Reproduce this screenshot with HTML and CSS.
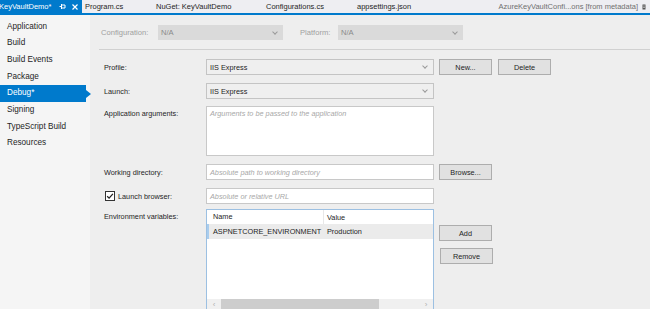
FILE: index.html
```html
<!DOCTYPE html>
<html lang="en">
<head>
    <meta charset="UTF-8">
    <title>KeyVaultDemo - Debug</title>
    <link rel="stylesheet" href="styles.css">
</head>
<body>
<!-- document tabs -->
<div class="tabs">
    <div class="tab active">
        <span>KeyVaultDemo*</span>
        <svg class="pin" width="7" height="7" viewBox="0 0 7 7"><path d="M0.5 3.5h2M2.5 1v5M2.5 2h3.5v3H2.5" fill="none" stroke="#fff" stroke-width="1"/></svg>
        <svg class="close" width="6" height="6" viewBox="0 0 6 6"><path d="M0.5 0.5l5 5M5.5 0.5l-5 5" stroke="#fff" stroke-width="1.2"/></svg>
    </div>
    <div class="tab tab-program">Program.cs</div>
    <div class="tab tab-nuget">NuGet: KeyVaultDemo</div>
    <div class="tab tab-config">Configurations.cs</div>
    <div class="tab">appsettings.json</div>
    <div class="tab preview">
        <span>AzureKeyVaultConfi...ons [from metadata]</span>
        <svg class="lock" width="4" height="6" viewBox="0 0 4 6"><path d="M0.5 0.5h3v5h-3z" fill="#555"/><path d="M1 2h2M1 3.5h2" stroke="#ddd" stroke-width="0.6"/></svg>
    </div>
</div>

<div class="workspace">
    <!-- property pages -->
    <ul class="sidebar">
        <li>Application</li>
        <li>Build</li>
        <li>Build Events</li>
        <li>Package</li>
        <li class="selected">Debug*</li>
        <li>Signing</li>
        <li>TypeScript Build</li>
        <li>Resources</li>
    </ul>

    <div class="main">
        <div class="config-row">
            <span class="config-label">Configuration:</span>
            <div class="config-select"><span>N/A</span><span class="chev"></span></div>
            <span class="config-label platform">Platform:</span>
            <div class="config-select"><span>N/A</span><span class="chev"></span></div>
        </div>
        <div class="separator"></div>

        <div class="form">
            <div class="row row-profile">
                <label class="label">Profile:</label>
                <div class="field select"><span>IIS Express</span><span class="chev"></span></div>
                <button class="btn">New...</button>
                <button class="btn">Delete</button>
            </div>

            <div class="row">
                <label class="label">Launch:</label>
                <div class="field select"><span>IIS Express</span><span class="chev"></span></div>
            </div>

            <div class="row row-top">
                <label class="label label-top">Application arguments:</label>
                <div class="field textarea"><span class="placeholder">Arguments to be passed to the application</span></div>
            </div>

            <div class="row">
                <label class="label">Working directory:</label>
                <div class="field input"><span class="placeholder">Absolute path to working directory</span></div>
                <button class="btn">Browse...</button>
            </div>

            <div class="row">
                <label class="label">
                    <svg class="check" width="10" height="10" viewBox="0 0 10 10"><rect x="0.5" y="0.5" width="9" height="9" fill="#fff" stroke="#333"/><path d="M2.2 5.2l1.9 1.9 3.8-4.2" fill="none" stroke="#222" stroke-width="1.3"/></svg>
                    Launch browser:
                </label>
                <div class="field input"><span class="placeholder">Absolute or relative URL</span></div>
            </div>

            <div class="row row-top row-env">
                <label class="label label-top">Environment variables:</label>
                <div class="env-table">
                    <div class="env-head">
                        <div class="col-name">Name</div>
                        <div class="col-value">Value</div>
                    </div>
                    <div class="env-row">
                        <div class="col-name">ASPNETCORE_ENVIRONMENT</div>
                        <div class="col-value">Production</div>
                    </div>
                    <div class="env-fill"></div>
                    <div class="hscroll">
                        <span class="arrow">&#8249;</span>
                        <span class="thumb"></span>
                        <span class="track"></span>
                        <span class="arrow">&#8250;</span>
                    </div>
                </div>
                <div class="side-buttons">
                    <button class="btn">Add</button>
                    <button class="btn">Remove</button>
                </div>
            </div>
        </div>
    </div>
</div>
</body>
</html>
```

FILE: styles.css
```css
* {
    box-sizing: border-box;
}

body {
    margin: 0;
    width: 650px;
    height: 309px;
    overflow: hidden;
    background: #eeeeee;
    font-family: "Liberation Sans", Arial, sans-serif;
    color: #1e1e1e;
}

/* tab strip */
.tabs {
    display: flex;
    height: 15px;
    background: #eeeef2;
    border-bottom: 2px solid #007acc;
    font-size: 7.5px;
    line-height: 13px;
    white-space: nowrap;
}

.tab {
    padding-left: 3px;
}

.tab.active {
    display: flex;
    align-items: center;
    width: 84px;
    margin-left: -2px;
    padding-left: 1px;
    background: #007acc;
    color: #fff;
}

.tab.active .pin {
    margin-left: auto;
}

.tab.active .close {
    margin-left: 6px;
    margin-right: 4px;
}

.tab-program { width: 71px; }
.tab-nuget { width: 110px; }
.tab-config { width: 91px; }

.tab.preview {
    display: flex;
    align-items: center;
    margin-left: auto;
    color: #707070;
}

.tab.preview .lock {
    margin: 0 4px 0 4px;
}

/* left navigation */
.workspace {
    display: flex;
    height: 294px;
}

.sidebar {
    width: 90px;
    margin: 0;
    padding: 3.65px 0 0;
    list-style: none;
    background: #f5f5f5;
    font-size: 8.2px;
}

.sidebar li {
    height: 16.7px;
    line-height: 16.7px;
    padding-left: 7px;
}

.sidebar li.selected {
    position: relative;
    width: 86px;
    background: #007acc;
    color: #fff;
}

.sidebar li.selected::after {
    content: "";
    position: absolute;
    left: 100%;
    top: 50%;
    margin-top: -4px;
    border-left: 5px solid #007acc;
    border-top: 4px solid transparent;
    border-bottom: 4px solid transparent;
}

/* main panel */
.main {
    flex: 1;
    padding: 10px 0 0 9px;
}

.config-row {
    display: flex;
    align-items: center;
    height: 15px;
    padding-left: 2px;
    font-size: 7.6px;
    color: #a0a0a0;
}

.config-label {
    width: 57px;
}

.config-label.platform {
    width: 38px;
    margin-left: 17px;
}

.config-select {
    display: flex;
    align-items: center;
    justify-content: space-between;
    width: 125px;
    height: 15px;
    padding: 0 6px 0 3px;
    background: #dadada;
    color: #8a8a8a;
}

.chev {
    width: 4px;
    height: 4px;
    margin-top: -2px;
    border-right: 1px solid #9a9a9a;
    border-bottom: 1px solid #9a9a9a;
    transform: rotate(45deg);
}

.separator {
    height: 1px;
    margin-top: 9px;
    background: #d0d0d0;
}

.form {
    padding-left: 5px;
    font-size: 7.3px;
}

.row {
    display: flex;
    align-items: center;
    margin-top: 8px;
}

.row-profile {
    margin-top: 9px;
}

.row-top {
    align-items: flex-start;
    margin-top: 7px;
}

.row-env {
    margin-top: 5px;
}

.label {
    display: flex;
    align-items: center;
    width: 102px;
    flex-shrink: 0;
}

.label-top {
    padding-top: 3px;
}

.check {
    margin: 0 3px 0 1px;
}

.field {
    display: flex;
    align-items: center;
    width: 228px;
    height: 16px;
    padding: 0 4px 0 3px;
    border: 1px solid #c8c8c8;
    background: #fff;
}

.field.select {
    justify-content: space-between;
    background: #efefef;
    border-color: #c4c4c4;
}

.field.select .chev {
    margin-right: 2px;
}

.field.textarea {
    align-items: flex-start;
    height: 50px;
    padding-top: 2px;
}

.placeholder {
    font-style: italic;
    color: #a8a8a8;
}

.btn {
    width: 53px;
    height: 16px;
    margin-left: 5px;
    padding: 0;
    border: 1px solid #adadad;
    background: #e1e1e1;
    font-family: inherit;
    font-size: 7.3px;
    color: #1e1e1e;
}

.btn + .btn {
    margin-left: 6px;
}

/* environment grid */
.env-table {
    display: flex;
    flex-direction: column;
    width: 228px;
    height: 102px;
    border: 1px solid #9cc0e2;
    background: #fff;
}

.env-head,
.env-row {
    display: flex;
    align-items: center;
}

.env-head {
    height: 14px;
}

.env-row {
    height: 15px;
    background: #ebebeb;
    border-left: 2px solid #a9cdee;
}

.col-name {
    width: 117px;
    padding-left: 6px;
    white-space: nowrap;
}

.env-row .col-name {
    width: 115px;
    padding-left: 4px;
}

.env-head .col-name {
    height: 100%;
    line-height: 14px;
    border-right: 1px solid #e8e8e8;
}

.col-value {
    padding-left: 3px;
}

.env-fill {
    flex: 1;
}

.hscroll {
    display: flex;
    align-items: center;
    height: 10px;
    margin-bottom: 1px;
    background: #f0f0f0;
    color: #b0b0b0;
    font-size: 8px;
}

.hscroll .arrow {
    width: 14px;
    text-align: center;
}

.hscroll .thumb {
    width: 158px;
    height: 100%;
    background: #cdcdcd;
}

.hscroll .track {
    flex: 1;
}

.side-buttons {
    display: flex;
    flex-direction: column;
    gap: 7px;
    padding-top: 16px;
}
```
